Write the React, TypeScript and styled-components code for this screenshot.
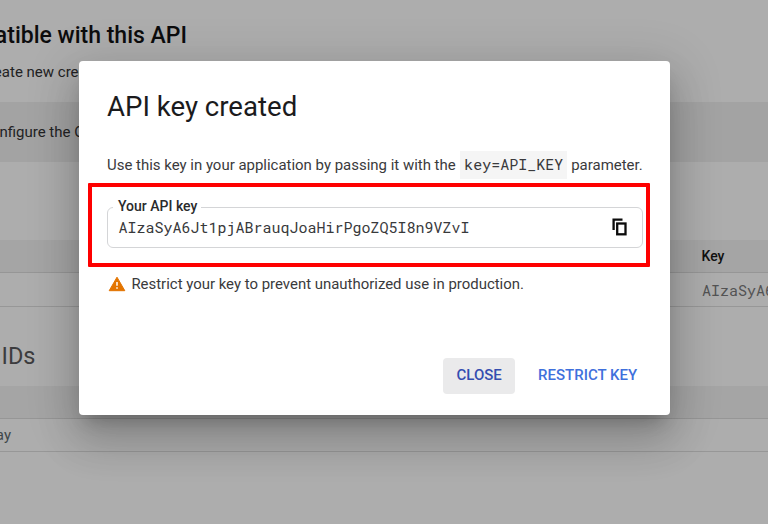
import React from "react";
import styled, { createGlobalStyle } from "styled-components";

const GlobalStyle = createGlobalStyle`
  body { margin: 0; background: #adadad; overflow: hidden; }
  *, *::before, *::after { box-sizing: border-box; }
`;

const mono = `"Roboto Mono", "DejaVu Sans Mono", "Liberation Mono", monospace`;

const Screen = styled.div`
  position: relative;
  width: 768px;
  height: 524px;
  overflow: hidden;
  background: #adadad;
  font-family: Roboto, sans-serif;
  color: #202124;
`;

const Page = styled.main`
  display: flex;
  flex-direction: column;
  height: 100%;
`;

/* Background copy is scrolled off to the left, so it is anchored by its right end. */
const ScrolledLine = styled.div<{ $end: number; $height: number }>`
  display: flex;
  justify-content: flex-end;
  align-items: center;
  width: ${(p) => p.$end}px;
  height: ${(p) => p.$height}px;
  white-space: nowrap;
  flex: none;
`;

const PageTitle = styled.h1`
  margin: 0;
  font-size: 23px;
  font-weight: 500;
  color: #0c0c0d;
`;

const SectionTitle = styled.h2`
  margin: 0;
  padding-top: 18px;
  font-size: 23.5px;
  font-weight: 400;
  color: #3c3c3e;
`;

const PageText = styled.span<{ $muted?: boolean }>`
  font-size: 15px;
  color: ${(p) => (p.$muted ? "#3f474a" : "#222223")};
`;

const Intro = styled.header`
  height: 102px;
  padding-top: 19px;
  flex: none;
`;

const Banner = styled.section`
  height: 60px;
  background: #a3a3a3;
  flex: none;
`;

const TableHead = styled.div<{ $gap: number }>`
  display: flex;
  align-items: center;
  height: 33px;
  margin-top: ${(p) => p.$gap}px;
  padding-left: 701.5px;
  background: #a5a5a5;
  border-bottom: 1px solid #969696;
  font-size: 14px;
  font-weight: 500;
  color: #111;
  flex: none;
`;

const TableRow = styled.div<{ $height: number }>`
  display: flex;
  align-items: center;
  height: ${(p) => p.$height}px;
  border-bottom: 1px solid #979797;
  white-space: nowrap;
  flex: none;
`;

const TruncatedKey = styled.span`
  margin-left: 702px;
  font-family: ${mono};
  font-size: 15px;
  color: #535354;
`;

const Dialog = styled.section`
  position: absolute;
  left: 79px;
  top: 61px;
  width: 591px;
  height: 354px;
  padding: 29px 28px 21px;
  display: flex;
  flex-direction: column;
  background: #fff;
  border-radius: 4px;
  box-shadow: 0 12px 16px -7px rgba(0, 0, 0, 0.2),
    0 26px 41px 3px rgba(0, 0, 0, 0.14), 0 10px 49px 9px rgba(0, 0, 0, 0.12);
`;

const DialogTitle = styled.h2`
  margin: 0;
  font-size: 27.6px;
  line-height: 34px;
  font-weight: 400;
  color: #1b1b1d;
`;

const Instruction = styled.p`
  display: flex;
  align-items: center;
  height: 28px;
  margin: 27px 0 0;
  font-size: 14.96px;
  white-space: nowrap;
  color: #3a3a3c;
`;

const Code = styled.code`
  display: flex;
  align-items: center;
  height: 28px;
  margin: 0 4px;
  padding: 0 4px 2px 4.5px;
  background: #f5f5f5;
  font-family: ${mono};
  font-size: 15px;
`;

const Highlight = styled.div`
  height: 84px;
  margin: 4px -8px 0 -19px;
  padding: 10px 3px 0 15px;
  width: 562px;
  border: 4px solid #fe0000;
  border-radius: 1px;
`;

const KeyField = styled.fieldset`
  display: flex;
  align-items: center;
  justify-content: space-between;
  width: 536px;
  height: 51px;
  margin: 0;
  padding: 0 15px 10px 10.5px;
  border: 1px solid #d4d5d7;
  border-radius: 6px;
  color: #38393b;
`;

const FieldLabel = styled.legend`
  padding: 0 4px 2px 5px;
  margin-left: -5.5px;
  font-size: 14px;
  line-height: 18px;
  font-weight: 500;
  color: #2a2b2d;
`;

const KeyValue = styled.span`
  font-family: ${mono};
  font-size: 15px;
`;

const Warning = styled.p`
  display: flex;
  align-items: center;
  gap: 5px;
  height: 20px;
  margin: 7px 0 0 1.4px;
  font-size: 14.95px;
  white-space: nowrap;
  color: #3a3a3c;
`;

const Actions = styled.footer`
  display: flex;
  justify-content: flex-end;
  gap: 9.5px;
  margin: auto -8.5px 0 0;
`;

const Button = styled.button<{ $active?: boolean }>`
  height: 36px;
  padding: 0 13.4px 2px;
  border: 0;
  border-radius: 4px;
  background: ${(p) => (p.$active ? "#eaeaeb" : "transparent")};
  color: ${(p) => (p.$active ? "#344db0" : "#3f70dc")};
  font-family: Roboto, sans-serif;
  font-size: 15px;
  font-weight: 500;
  white-space: nowrap;
`;

const CopyIcon = () => (
  <svg width="15" height="18" viewBox="0 0 15 18" fill="none" stroke="#0c0c0c" strokeWidth="2.3">
    <path d="M1.6 12V1.7H10.5" />
    <rect x="5.2" y="5.5" width="8.3" height="10.8" />
  </svg>
);

const WarningIcon = () => (
  <svg width="18" height="16" viewBox="0 0 18 16">
    <path d="M9 1.2 16.8 14.7H1.2Z" fill="#e37400" stroke="#e37400" strokeLinejoin="round" />
    <path d="M9 6V9.8M9 11.2V12.8" stroke="#fff" strokeWidth="1.5" />
  </svg>
);

export default function App() {
  return (
    <>
      <GlobalStyle />
      <Screen>
        <Page>
          <Intro>
            <ScrolledLine $end={187} $height={32}>
              <PageTitle>atible with this API</PageTitle>
            </ScrolledLine>
            <ScrolledLine $end={87} $height={42}>
              <PageText>eate new cred</PageText>
            </ScrolledLine>
          </Intro>
          <Banner>
            <ScrolledLine $end={84.5} $height={60}>
              <PageText>nfigure the O</PageText>
            </ScrolledLine>
          </Banner>
          <TableHead $gap={78}>Key</TableHead>
          <TableRow $height={34}>
            <TruncatedKey>AIzaSyA6Jt1pj</TruncatedKey>
          </TableRow>
          <ScrolledLine $end={35.5} $height={79}>
            <SectionTitle>&nbsp;IDs</SectionTitle>
          </ScrolledLine>
          <TableHead $gap={0} />
          <TableRow $height={33}>
            <ScrolledLine $end={11} $height={30}>
              <PageText $muted>ay</PageText>
            </ScrolledLine>
          </TableRow>
        </Page>
        <Dialog role="dialog" aria-labelledby="dialog-title">
          <DialogTitle id="dialog-title">API key created</DialogTitle>
          <Instruction>
            <span>Use this key in your application by passing it with the</span>
            <Code>key=API_KEY</Code>
            <span>parameter.</span>
          </Instruction>
          <Highlight>
            <KeyField>
              <FieldLabel>Your API key</FieldLabel>
              <KeyValue>AIzaSyA6Jt1pjABrauqJoaHirPgoZQ5I8n9VZvI</KeyValue>
              <CopyIcon />
            </KeyField>
          </Highlight>
          <Warning>
            <WarningIcon />
            <span>Restrict your key to prevent unauthorized use in production.</span>
          </Warning>
          <Actions>
            <Button $active>CLOSE</Button>
            <Button>RESTRICT KEY</Button>
          </Actions>
        </Dialog>
      </Screen>
    </>
  );
}
